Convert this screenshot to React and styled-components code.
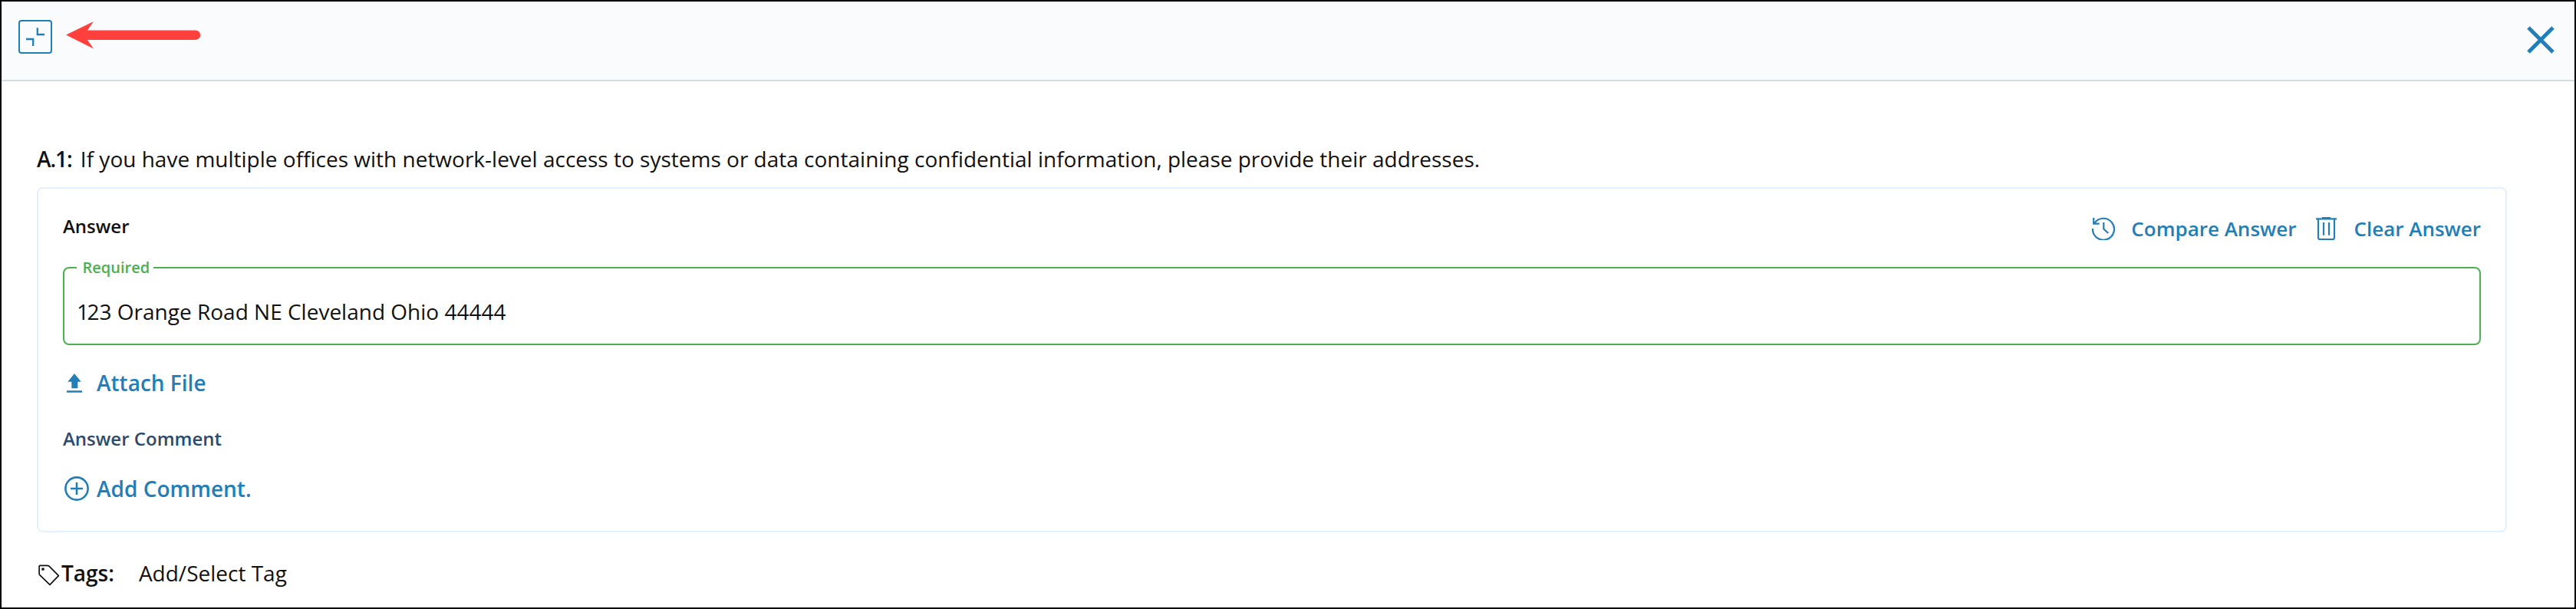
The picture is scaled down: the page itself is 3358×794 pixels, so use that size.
import React from "react";
import styled, { createGlobalStyle } from "styled-components";

const GlobalStyle = createGlobalStyle`
  * { box-sizing: border-box; }
  body { margin: 0; background: #fff; font-family: "Open Sans", sans-serif; color: #111; }
  svg { display: block; flex: none; }
`;

const Frame = styled.div`
  width: 3358px;
  height: 794px;
  border: 2px solid #000;
  background: #fff;
  overflow: hidden;
`;

const Header = styled.header`
  display: flex;
  align-items: flex-start;
  height: 104px;
  padding: 24px 22px 0 22px;
  background: #fafbfd;
  border-bottom: 2px solid #d3dce2;
`;

const IconButton = styled.button`
  display: flex;
  align-items: center;
  justify-content: center;
  width: 44px;
  height: 44px;
  margin-top: ${(p) => (p.$outlined ? 0 : 4)}px;
  padding: 0;
  background: none;
  border: ${(p) => (p.$outlined ? "2px solid #227eb7" : "0")};
  border-radius: 4px;
  color: #227eb7;
`;

const ArrowSlot = styled.div`
  flex: 1;
  padding: 2px 0 0 18px;
`;

const Content = styled.main`
  padding: 80px 88px 0 46px;
`;

const Question = styled.p`
  margin: 0 0 16px;
  font-size: 28px;
  line-height: 42px;
  white-space: nowrap;
`;

const Strong = styled.span`
  font-weight: 600;
  letter-spacing: ${(p) => p.$tracking || 0}px;
  margin-right: ${(p) => p.$gap}px;
`;

const Card = styled.section`
  height: 450px;
  padding: 31px 32px 0;
  border: 2px solid #e3f1fe;
  border-radius: 8px;
`;

const CardHead = styled.div`
  display: flex;
  justify-content: space-between;
  height: 60px;
`;

const Label = styled.div`
  font-size: 24px;
  line-height: 36px;
  font-weight: 600;
  color: ${(p) => p.$color || "#111"};
`;

const Actions = styled.div`
  display: flex;
  gap: 26px;
`;

const Action = styled.a`
  display: flex;
  align-items: flex-start;
  gap: ${(p) => p.$gap}px;
  margin-left: ${(p) => p.$indent || 0}px;
  font-size: ${(p) => p.$size || 28}px;
  line-height: 42px;
  font-weight: 600;
  color: #227eb7;
  white-space: nowrap;
`;

const Field = styled.fieldset`
  height: 113px;
  margin: 0;
  padding: 0 16px;
  min-width: 0;
  border: 2px solid #4caf50;
  border-radius: 8px;
`;

const Legend = styled.legend`
  width: 100px;
  height: 24px;
  padding: 0 0 0 7.5px;
  font-size: 20px;
  line-height: 24px;
  font-weight: 600;
  color: #4caf50;
`;

const Value = styled.div`
  padding-top: 24px;
  font-size: 28px;
  line-height: 42px;

  &::first-letter {
    letter-spacing: -2.5px;
  }
`;

const Stack = styled.div`
  display: flex;
  flex-direction: column;
  align-items: flex-start;
  padding-top: 28px;
`;

const CommentLabel = styled(Label)`
  margin: 34px 0 26px;
`;

const TagRow = styled.div`
  display: flex;
  align-items: flex-start;
  padding-top: 32px;
  font-size: 28px;
  line-height: 42px;
`;

const Icon = styled.svg`
  margin-top: ${(p) => p.$top || 0}px;
`;

const CollapseIcon = () => (
  <Icon width="40" height="40" viewBox="0 0 40 40" fill="none" stroke="currentColor" strokeWidth="2.3">
    <path d="M22.800 8.200V17H32M8 23H17.200V32" />
  </Icon>
);

const PointerArrow = () => (
  <Icon width="178" height="40" viewBox="0 0 178 40" fill="#ff403c">
    <path d="M0 17.500L36 0L28 11.500H169a6.200 6.200 0 0 1 0 12.400H28L36 35.500Z" />
  </Icon>
);

const CloseIcon = () => (
  <Icon width="36" height="36" viewBox="0 0 36 36" stroke="currentColor" strokeWidth="5">
    <path d="M2 2L34 34M34 2L2 34" />
  </Icon>
);

const HistoryIcon = () => (
  <Icon $top={6} width="30" height="30" viewBox="0 0 30 30" fill="none" stroke="currentColor" strokeWidth="2.2">
    <path d="M3 8.500A14 14 0 1 1 1 15M2.200 1V8.600H9.700M15.300 7V15.500L21.300 21" />
  </Icon>
);

const TrashIcon = () => (
  <Icon $top={6} width="27" height="30" viewBox="0 0 27 30" fill="none" stroke="currentColor" strokeWidth="2.200">
    <path d="M0 2.300H27M8 1H19M3 2.500V27Q3 29 5 29H22Q24 29 24 27V2.500M10 7V23.700M17 7V23.700" />
  </Icon>
);

const UploadIcon = () => (
  <Icon $top={9} width="20" height="25" viewBox="0 0 20 25" fill="currentColor">
    <path d="M10 0L18.700 10.700H14.300V19.300H6.300V10.700H1.300ZM0 22.300H20V24.700H0Z" />
  </Icon>
);

const PlusCircleIcon = () => (
  <Icon $top={5} width="32" height="32" viewBox="0 0 32 32" fill="none" stroke="currentColor" strokeWidth="2.6">
    <circle cx="16" cy="16" r="14.600" />
    <path d="M16 8V24M8 16H24" />
  </Icon>
);

const TagIcon = () => (
  <Icon $top={10} width="32" height="28" viewBox="0 0 32 28" fill="none" stroke="#111" strokeWidth="1.700" strokeLinejoin="round">
    <path d="M4.200 1.300H13.500Q15 1.300 16 2.200L28.400 14.600L17 26.300L4 13.800Q3.100 13 3.100 12V2.400Q3.100 1.300 4.200 1.300Z" />
    <circle cx="8" cy="6" r="1" fill="#111" />
  </Icon>
);

export default function App() {
  return (
    <Frame>
      <GlobalStyle />
      <Header>
        <IconButton $outlined aria-label="Collapse"><CollapseIcon /></IconButton>
        <ArrowSlot><PointerArrow /></ArrowSlot>
        <IconButton aria-label="Close"><CloseIcon /></IconButton>
      </Header>
      <Content>
        <Question>
          <Strong $tracking={-1.1} $gap={11.4}>A.1:</Strong>
          If you have multiple offices with network-level access to systems or data containing confidential information, please provide their addresses.
        </Question>
        <Card>
          <CardHead>
            <Label>Answer</Label>
            <Actions>
              <Action $size={26} $gap={21}><HistoryIcon />Compare Answer</Action>
              <Action $size={26} $gap={22}><TrashIcon />Clear Answer</Action>
            </Actions>
          </CardHead>
          <Field>
            <Legend>Required</Legend>
            <Value>123 Orange Road NE Cleveland Ohio 44444</Value>
          </Field>
          <Stack>
            <Action $indent={5} $gap={19}><UploadIcon />Attach File</Action>
            <CommentLabel $color="#2c4a6c">Answer Comment</CommentLabel>
            <Action $indent={2} $gap={10}><PlusCircleIcon />Add Comment.</Action>
          </Stack>
        </Card>
        <TagRow>
          <TagIcon />
          <Strong $gap={32}>Tags:</Strong>
          <span>Add/Select Tag</span>
        </TagRow>
      </Content>
    </Frame>
  );
}
